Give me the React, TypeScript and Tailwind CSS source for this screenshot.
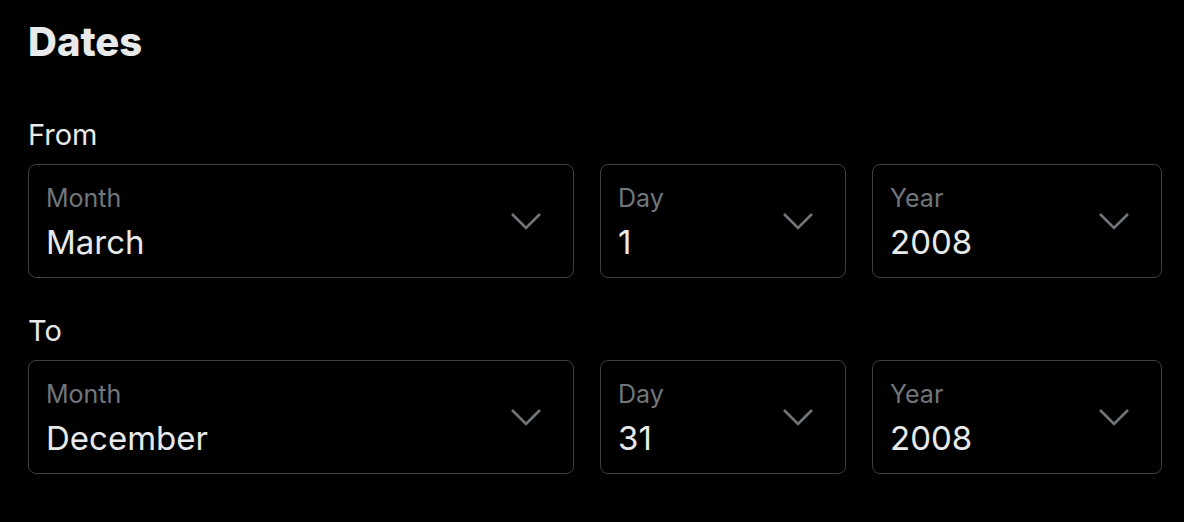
import type { ReactNode } from "react";

type SelectBoxProps = {
  label: string;
  value: string;
  width: string;
};

function Chevron() {
  return (
    <svg
      width="34"
      height="20"
      viewBox="0 0 34 20"
      fill="none"
      className="shrink-0"
      aria-hidden
    >
      <polyline
        points="3,3 17,17 31,3"
        stroke="#71767b"
        strokeWidth="2.6"
        strokeLinejoin="miter"
      />
    </svg>
  );
}

function SelectBox({ label, value, width }: SelectBoxProps) {
  return (
    <div
      className={`${width} box-border flex h-[114px] shrink-0 items-center justify-between rounded-[8px] border-[1.5px] border-[#3c3f43] pl-[17px] pr-[30px]`}
    >
      <div className="flex flex-col pt-[2px]">
        <span className="text-[25px] leading-[30px] text-[#71767b]">{label}</span>
        <span className="mt-[9px] text-[33px] leading-[40px] text-[#e7e9ea]">{value}</span>
      </div>
      <Chevron />
    </div>
  );
}

function DateRow({ children }: { children: ReactNode }) {
  return <div className="flex gap-[26px]">{children}</div>;
}

export default function App() {
  return (
    <div
      className="h-[522px] w-[1184px] overflow-hidden bg-black pl-[28px] pr-[22px] pt-[19px]"
      style={{ fontFamily: "Inter, 'Noto Sans', sans-serif" }}
    >
      <h2 className="text-[40px] font-extrabold leading-[46px] text-[#e7e9ea]">Dates</h2>

      <p className="mt-[52px] text-[29px] leading-[36px] text-[#e7e9ea]">From</p>
      <div className="mt-[11px]">
        <DateRow>
          <SelectBox label="Month" value="March" width="w-[546px]" />
          <SelectBox label="Day" value="1" width="w-[246px]" />
          <SelectBox label="Year" value="2008" width="w-[290px]" />
        </DateRow>
      </div>

      <p className="mt-[35px] text-[29px] leading-[36px] text-[#e7e9ea]">To</p>
      <div className="mt-[11px]">
        <DateRow>
          <SelectBox label="Month" value="December" width="w-[546px]" />
          <SelectBox label="Day" value="31" width="w-[246px]" />
          <SelectBox label="Year" value="2008" width="w-[290px]" />
        </DateRow>
      </div>
    </div>
  );
}
